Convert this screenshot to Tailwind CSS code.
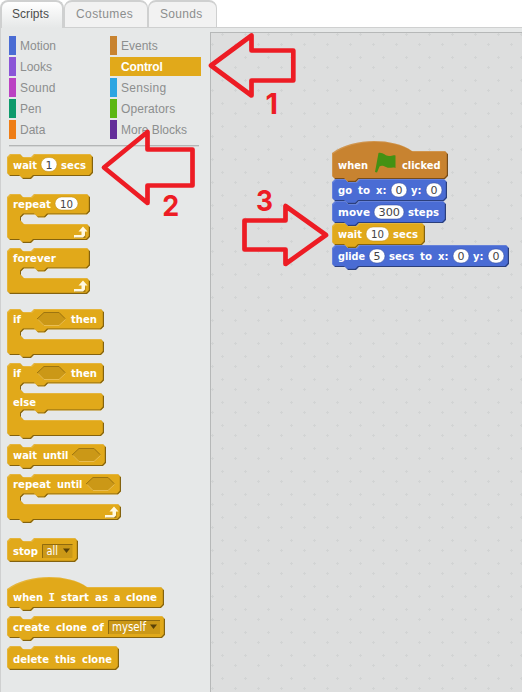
<!DOCTYPE html>
<html lang="en">
<head>
<meta charset="utf-8">
<title>Scripts</title>
<script src="https://cdn.jsdelivr.net/npm/@tailwindcss/browser@4"></script>
</head>
<body class="relative flex h-[692px] w-[522px] flex-col overflow-hidden bg-white font-['Liberation_Sans',Arial,sans-serif] text-[12px] leading-[20px] text-[#8c8e8e]">

<svg class="absolute h-0 w-0">
  <defs>
    <filter id="bevel" x="-5%" y="-10%" width="110%" height="125%" color-interpolation-filters="sRGB">
      <feOffset in="SourceAlpha" dx="-1.2" dy="-1.2" result="a"/>
      <feComposite in="SourceAlpha" in2="a" operator="out" result="b"/>
      <feGaussianBlur in="b" stdDeviation=".35" result="b2"/>
      <feComposite in="b2" in2="SourceAlpha" operator="in" result="b3"/>
      <feComponentTransfer in="b3" result="dark"><feFuncA type="linear" slope=".42"/></feComponentTransfer>
      <feOffset in="SourceAlpha" dx="1" dy="1" result="c"/>
      <feComposite in="SourceAlpha" in2="c" operator="out" result="d"/>
      <feFlood flood-color="#fff" flood-opacity=".15"/>
      <feComposite in2="d" operator="in" result="light"/>
      <feMerge><feMergeNode in="SourceGraphic"/><feMergeNode in="light"/><feMergeNode in="dark"/></feMerge>
    </filter>
    <g id="slot"><path d="M0 7L7 0H22L29 7L22 14H7Z" fill="#cb9817"/><path d="M0 7L7 .5H22L28 6.5" fill="none" stroke="#9d7510"/><path d="M1 7.5L7 13.5H22L28.5 7.5" fill="none" stroke="#e9bd52"/></g>
    <g id="loop"><path d="M0 8.500H9.500V4" fill="none" stroke="#a67c10" stroke-width="2" transform="translate(1 1)"/><path d="M0 7.500H7.500V4H4.500L9 -1L13.500 4H11V8L9 10H0Z" fill="#fff8e0"/></g>
    <pattern id="dots" width="23" height="23" patternUnits="userSpaceOnUse"><path d="M10 1.5H13M11.5 0V3M0 11.5H3M1.5 10V13" stroke="#d2d4d4"/></pattern>
  </defs>
</svg>

<header class="relative z-10 flex h-[28px]">
  <div class="h-[28px] w-[64px] rounded-t-[8px] border-2 border-b-0 border-[#cfd0d0] bg-linear-to-b from-white to-[#e6e8e8] pt-[2px] pl-[10px] text-[#4c4d4d]"><span class="tracking-[0.05px]">Scripts</span></div>
  <div class="h-[28px] w-[84px] rounded-t-[8px] border border-t-2 border-[#cfd0d0] bg-[#f2f2f2] pt-[2px] pl-[11px]"><span class="tracking-[0.4px]">Costumes</span></div>
  <div class="h-[28px] w-[69px] rounded-t-[8px] border border-t-2 border-[#cfd0d0] bg-[#f2f2f2] pt-[2px] pl-[11px]"><span class="tracking-[0.3px]">Sounds</span></div>
  <div class="flex-1 border-b border-[#cfd0d0]"></div>
</header>

<main class="flex flex-1 border-l border-[#cfd0d0] bg-[#e6e8e8]">
  <aside class="flex w-[209px] flex-col pt-[8px]">
    <nav class="grid grid-cols-[101px_91px] gap-y-[2px] pl-[8px]">
      <div class="flex h-[19px] gap-[4px]"><i class="w-[7px] bg-[#4a6cd4]"></i>Motion</div>
      <div class="flex h-[19px] gap-[4px]"><i class="w-[7px] bg-[#c88330]"></i>Events</div>
      <div class="flex h-[19px] gap-[4px]"><i class="w-[7px] bg-[#8a55d7]"></i>Looks</div>
      <div class="flex h-[19px] bg-[#e1a91a] pl-[11px] font-bold tracking-[-0.15px] text-white">Control</div>
      <div class="flex h-[19px] gap-[4px]"><i class="w-[7px] bg-[#bb42c3]"></i><span class="tracking-[0.2px]">Sound</span></div>
      <div class="flex h-[19px] gap-[4px]"><i class="w-[7px] bg-[#2ca5e2]"></i><span class="tracking-[0.3px]">Sensing</span></div>
      <div class="flex h-[19px] gap-[4px]"><i class="w-[7px] bg-[#0e9a6c]"></i>Pen</div>
      <div class="flex h-[19px] gap-[4px]"><i class="w-[7px] bg-[#5cb712]"></i><span class="tracking-[0.1px]">Operators</span></div>
      <div class="flex h-[19px] gap-[4px]"><i class="w-[7px] bg-[#ee7d16]"></i>Data</div>
      <div class="flex h-[19px] gap-[4px]"><i class="w-[7px] bg-[#632d99]"></i>More Blocks</div>
    </nav>
    <div class="mt-[6px] ml-[8px] h-[2px] w-[190px] border-t border-[#b4b6b6] bg-[#d4d6d6]"></div>

    <div class="mt-[7px] flex flex-col pl-[6px] font-['DejaVu_Sans'] text-[11px] font-bold">
      <svg class="mb-[16px] h-[24px] w-[86px] overflow-visible fill-white">
        <path class="fill-[#e1a91a]" filter="url(#bevel)" d="M0 3L3 0H13L16 3H24L27 0H83L86 3V19L83 22H27L24 25H16L13 22H3L0 19Z"/>
        <text x="6" y="15" textLength="24">wait</text>
        <rect x="34" y="3.5" width="16" height="14" rx="7" stroke="#b98a14" stroke-opacity=".5"/><text class="fill-[#444] font-normal" x="38.5" y="15">1</text>
        <text x="54" y="15" textLength="25">secs</text>
      </svg>
      <svg class="mb-[6px] h-[48px] w-[83px] overflow-visible fill-white">
        <path class="fill-[#e1a91a]" filter="url(#bevel)" d="M0 3L3 0H13L16 3H24L27 0H80L83 3V17.500L80 20.500H41L38 23.500H31L28 20.500H17L14 23.500V27L17 30H80L83 33V43L80 46H27L24 49H16L13 46H3L0 43Z"/>
        <text x="6" y="14" textLength="38">repeat</text>
        <rect x="48" y="3" width="23" height="13" rx="6.500" stroke="#b98a14" stroke-opacity=".5"/><text class="fill-[#444] font-normal" x="53" y="14" textLength="13">10</text>
        <use href="#loop" x="67" y="33.500"/>
      </svg>
      <svg class="mb-[13px] h-[48px] w-[83px] overflow-visible fill-white">
        <path class="fill-[#e1a91a]" filter="url(#bevel)" d="M0 3L3 0H13L16 3H24L27 0H80L83 3V17.500L80 20.500H41L38 23.500H31L28 20.500H17L14 23.500V27L17 30H80L83 33V43L80 46H3L0 43Z"/>
        <text x="6" y="14" textLength="43">forever</text>
        <use href="#loop" x="67" y="33.500"/>
      </svg>
      <svg class="mb-[6px] h-[48px] w-[97px] overflow-visible fill-white">
        <path class="fill-[#e1a91a]" filter="url(#bevel)" d="M0 3L3 0H13L16 3H24L27 0H94L97 3V17.500L94 20.500H41L38 23.500H31L28 20.500H17L14 23.500V27L17 30H94L97 33V43L94 46H27L24 49H16L13 46H3L0 43Z"/>
        <text x="6" y="14" textLength="8">if</text><use href="#slot" x="30" y="3"/><text x="64" y="14" textLength="26">then</text>
      </svg>
      <svg class="mb-[6px] h-[75px] w-[97px] overflow-visible fill-white">
        <path class="fill-[#e1a91a]" filter="url(#bevel)" d="M0 3L3 0H13L16 3H24L27 0H94L97 3V17.500L94 20.500H41L38 23.500H31L28 20.500H17L14 23.500V27L17 30H94L97 33V44.500L94 47.500H41L38 50.500H31L28 47.500H17L14 50.500V54L17 57H94L97 60V70L94 73H27L24 76H16L13 73H3L0 70Z"/>
        <text x="6" y="14" textLength="8">if</text><use href="#slot" x="30" y="3"/><text x="64" y="14" textLength="26">then</text>
        <text x="6" y="43" textLength="23">else</text>
      </svg>
      <svg class="mb-[6px] h-[24px] w-[100px] overflow-visible fill-white">
        <path class="fill-[#e1a91a]" filter="url(#bevel)" d="M0 3L3 0H13L16 3H24L27 0H96L99 3V19L96 22H27L24 25H16L13 22H3L0 19Z"/>
        <text x="6" y="15" textLength="24">wait</text><text x="36" y="15" textLength="25.500">until</text><use href="#slot" x="65" y="4"/>
      </svg>
      <svg class="mb-[16px] h-[48px] w-[114px] overflow-visible fill-white">
        <path class="fill-[#e1a91a]" filter="url(#bevel)" d="M0 3L3 0H13L16 3H24L27 0H111L114 3V17.500L111 20.500H41L38 23.500H31L28 20.500H17L14 23.500V27L17 30H111L114 33V43L111 46H27L24 49H16L13 46H3L0 43Z"/>
        <text x="6" y="14" textLength="38">repeat</text><text x="50" y="14" textLength="25.500">until</text><use href="#slot" x="79" y="3"/>
        <use href="#loop" x="98" y="33.500"/>
      </svg>
      <svg class="mb-[15px] h-[24px] w-[71px] overflow-visible fill-white">
        <path class="fill-[#e1a91a]" filter="url(#bevel)" d="M0 3L3 0H13L16 3H24L27 0H68L71 3V21L68 24H3L0 21Z"/>
        <text x="6" y="17" textLength="25">stop</text>
        <path class="fill-[#cb9817]" d="M35 6H65.500V20H35Z"/><path d="M35.500 20V6.500H65.500" fill="none" stroke="#8f6a0e"/>
        <text class="text-[12px] font-normal" x="39.500" y="17" textLength="11.500">all</text><path class="fill-[#5a4209]" d="M56 10.500H63L59.500 15Z"/>
      </svg>
      <svg class="mb-[6px] h-[33px] w-[157px] overflow-visible fill-white">
        <path class="fill-[#e1a91a]" filter="url(#bevel)" d="M0 12C20 -3 60 -4 80 10H154L157 13V28L154 31H27L24 34H16L13 31H3L0 28Z"/>
        <text x="6" y="24" textLength="30">when</text><text class="font-['DejaVu_Sans_Mono']" x="41.500" y="24">I</text><text x="54" y="24" textLength="28">start</text><text x="88" y="24" textLength="13">as</text><text x="107" y="24" textLength="6.500">a</text><text x="119" y="24" textLength="31">clone</text>
      </svg>
      <svg class="mb-[6px] h-[24px] w-[158px] overflow-visible fill-white">
        <path class="fill-[#e1a91a]" filter="url(#bevel)" d="M0 3L3 0H13L16 3H24L27 0H155L158 3V19L155 22H27L24 25H16L13 22H3L0 19Z"/>
        <text x="6" y="15" textLength="37">create</text><text x="49" y="15" textLength="31">clone</text><text x="85" y="15" textLength="12">of</text>
        <path class="fill-[#cb9817]" d="M101 4H153V18H101Z"/><path d="M101.500 18V4.500H153" fill="none" stroke="#8f6a0e"/>
        <text class="text-[12px] font-normal" x="105" y="15" textLength="34">myself</text><path class="fill-[#5a4209]" d="M143 8.500H150L146.500 13Z"/>
      </svg>
      <svg class="h-[24px] w-[112px] overflow-visible fill-white">
        <path class="fill-[#e1a91a]" filter="url(#bevel)" d="M0 3L3 0H13L16 3H24L27 0H109L112 3V21L109 24H3L0 21Z"/>
        <text x="6" y="17" textLength="36">delete</text><text x="48" y="17" textLength="21">this</text><text x="75" y="17" textLength="30">clone</text>
      </svg>
    </div>
  </aside>

  <section class="relative mt-[4px] flex-1 border-t border-l border-[#b6b8b8] bg-[#dddede]">
    <svg class="absolute inset-0 h-full w-full"><rect width="100%" height="100%" fill="url(#dots)"/></svg>
    <div class="absolute top-[108px] left-[121px] flex flex-col font-['DejaVu_Sans'] text-[11px] font-bold">
      <svg class="relative z-50 h-[38px] w-[116px] overflow-visible fill-white">
        <path class="fill-[#c88330]" filter="url(#bevel)" d="M0 12C20 -3 60 -4 80 10H113L116 13V35L113 38H27L24 41H16L13 38H3L0 35Z"/>
        <text x="6" y="28" textLength="30">when</text>
        <path class="fill-[#439113]" d="M46.500 12C51 11 53 15 57 15C60 15 61 13.500 63.500 14.500V27C60 25.500 58 28 54 26C51 24.500 49 24.500 47.500 25.500L45 31.500L43 31Z"/>
        <text x="70" y="28" textLength="38.500">clicked</text>
      </svg>
      <svg class="relative z-40 h-[22px] w-[115px] overflow-visible fill-white">
        <path class="fill-[#4a6cd4]" filter="url(#bevel)" d="M0 3L3 0H13L16 3H24L27 0H112L115 3V19L112 22H27L24 25H16L13 22H3L0 19Z"/>
        <text x="6" y="15" textLength="14">go</text><text x="26" y="15" textLength="12">to</text><text x="44" y="15" textLength="10.500">x:</text>
        <rect x="59" y="4" width="16" height="14" rx="7" stroke="#2c4697" stroke-opacity=".5"/><text class="fill-[#444] font-normal" x="63.500" y="15">0</text>
        <text x="79" y="15" textLength="10.500">y:</text>
        <rect x="94" y="4" width="16" height="14" rx="7" stroke="#2c4697" stroke-opacity=".5"/><text class="fill-[#444] font-normal" x="98.500" y="15">0</text>
      </svg>
      <svg class="relative z-30 h-[22px] w-[114px] overflow-visible fill-white">
        <path class="fill-[#4a6cd4]" filter="url(#bevel)" d="M0 3L3 0H13L16 3H24L27 0H111L114 3V19L111 22H27L24 25H16L13 22H3L0 19Z"/>
        <text x="6" y="15" textLength="32">move</text>
        <rect x="42" y="4" width="30" height="14" rx="7" stroke="#2c4697" stroke-opacity=".5"/><text class="fill-[#444] font-normal" x="46.500" y="15" textLength="21.500">300</text>
        <text x="76" y="15" textLength="31">steps</text>
      </svg>
      <svg class="relative z-20 h-[22px] w-[93px] overflow-visible fill-white">
        <path class="fill-[#e1a91a]" filter="url(#bevel)" d="M0 3L3 0H13L16 3H24L27 0H90L93 3V19L90 22H27L24 25H16L13 22H3L0 19Z"/>
        <text x="6" y="15" textLength="24">wait</text>
        <rect x="34" y="4" width="23" height="14" rx="7" stroke="#b98a14" stroke-opacity=".5"/><text class="fill-[#444] font-normal" x="39" y="15" textLength="13">10</text>
        <text x="61" y="15" textLength="25">secs</text>
      </svg>
      <svg class="relative z-10 h-[22px] w-[177px] overflow-visible fill-white">
        <path class="fill-[#4a6cd4]" filter="url(#bevel)" d="M0 3L3 0H13L16 3H24L27 0H174L177 3V19L174 22H27L24 25H16L13 22H3L0 19Z"/>
        <text x="6" y="15" textLength="27">glide</text>
        <rect x="37" y="4" width="16" height="14" rx="7" stroke="#2c4697" stroke-opacity=".5"/><text class="fill-[#444] font-normal" x="41.500" y="15">5</text>
        <text x="57" y="15" textLength="25">secs</text><text x="88" y="15" textLength="12">to</text><text x="106" y="15" textLength="10.500">x:</text>
        <rect x="121" y="4" width="16" height="14" rx="7" stroke="#2c4697" stroke-opacity=".5"/><text class="fill-[#444] font-normal" x="125.500" y="15">0</text>
        <text x="141" y="15" textLength="10.500">y:</text>
        <rect x="156" y="4" width="16" height="14" rx="7" stroke="#2c4697" stroke-opacity=".5"/><text class="fill-[#444] font-normal" x="160.500" y="15">0</text>
      </svg>
    </div>
  </section>
</main>

<svg class="pointer-events-none absolute inset-0 z-50 h-[692px] w-[522px] fill-[#ed1c24] font-['Inter',sans-serif] text-[29px] font-bold">
  <g fill="none" stroke="#ed1c24" stroke-width="4.700" stroke-linejoin="round">
    <path d="M211 65.500L251.500 35.500V50.500H293.300V80.500H251.500V95.500Z"/>
    <path d="M104 167.500L147.500 132V149.500H192.500V185.500H147.500V203Z"/>
    <path d="M326 235L285.500 206V220.500H244.500V249.500H285.500V264Z"/>
  </g>
  <text x="265.500" y="114">1</text>
  <text x="162.300" y="216" textLength="17">2</text>
  <text x="256" y="211" textLength="17">3</text>
</svg>

<script>
  // Labels are stretched to their word widths, glyphs included.
  document.querySelectorAll('text[textLength]').forEach(t => t.setAttribute('lengthAdjust', 'spacingAndGlyphs'));
</script>
</body>
</html>
